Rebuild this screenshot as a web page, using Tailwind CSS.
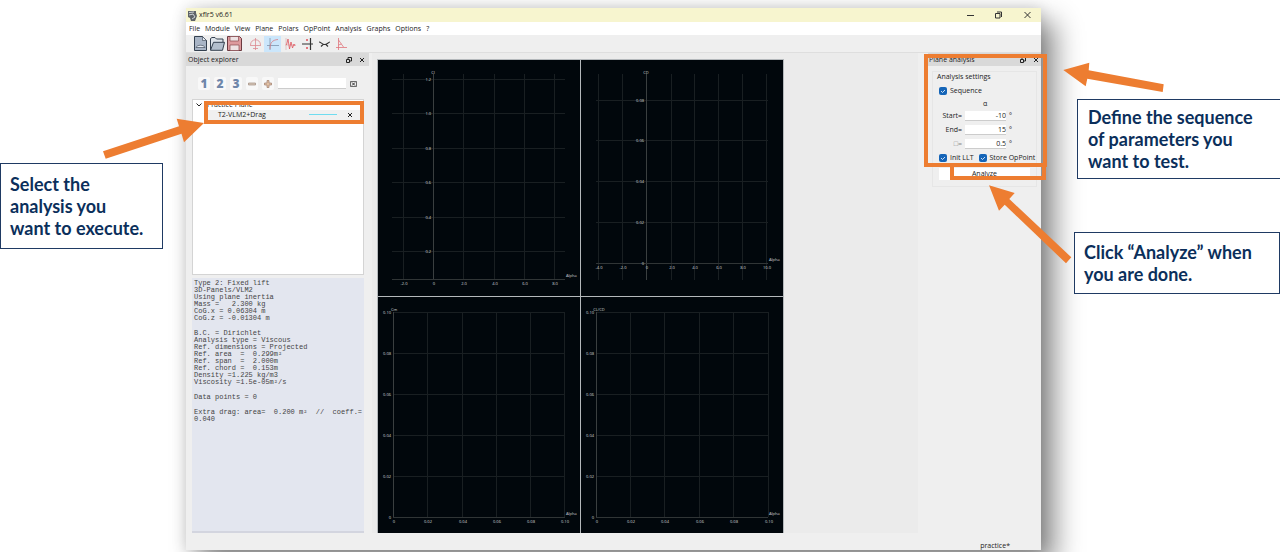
<!DOCTYPE html>
<html lang="en">
  <head>
    <meta charset="UTF-8" />
    <meta name="viewport" content="width=device-width, initial-scale=1.0" />
    <title>xflr5 v6.61</title>
    <script src="https://cdn.jsdelivr.net/npm/@tailwindcss/browser@4"></script>
  </head>
  <body class="bg-white">
    <div class="relative flex min-h-screen overflow-hidden font-['Open_Sans','Noto_Sans',sans-serif] text-[7px] leading-[10px] text-[#222]">
      <!-- Left callout -->
      <aside class="relative w-[186px] shrink-0 pt-[163px]">
        <p class="w-[163px] border border-[#1f3a63] bg-white py-[9px] pl-[9px] font-['Lato',sans-serif] text-[18px] leading-[22px] font-bold text-[#0b2f5b]">Select the<br />analysis you<br />want to execute.</p>
        <svg class="absolute top-0 left-0 z-20 overflow-visible" width="186" height="180" viewBox="0 0 186 180">
          <path fill="#ed7d31" d="M204 123 176.700 118.700 179 126.300 103 151.300 105.700 158.700 181.500 133.700 184 142.300z" />
        </svg>
      </aside>

      <!-- Application window -->
      <main class="relative mt-2 mb-[2px] flex min-w-0 flex-1 flex-col bg-[#efefef] shadow-[0_0_14px_rgba(0,0,0,0.15),14px_14px_26px_rgba(0,0,0,0.45)]">
        <header class="flex h-[14px] items-center bg-[#f7f5cf]">
          <svg class="ml-[2px]" width="9" height="11" viewBox="0 0 9 11">
            <path fill="#5d6268" d="M0 1h8v2l1 3-2 5H3L2 8 0 7z" />
            <path fill="none" stroke="#cfd3d8" d="M1 2.500 6 2M1 5l4-1 2 3-3 2" />
          </svg>
          <h1 class="ml-[2px]">xflr5 v6.61</h1>
          <div class="ml-auto flex items-center">
            <button class="mr-[21px]" aria-label="Minimize">
              <svg width="7" height="8" viewBox="0 0 7 8"><path stroke="#333" d="M0 4.500h7" /></svg>
            </button>
            <button class="mr-[22px]" aria-label="Restore">
              <svg width="7" height="8" viewBox="0 0 7 8" fill="none" stroke="#333"><path d="M.5 2.500h4.500v4.500H.5zM2 1h4.500v5" /></svg>
            </button>
            <button class="mr-[10px]" aria-label="Close">
              <svg width="7" height="8" viewBox="0 0 7 8" stroke="#333"><path d="m.5 1 6 6m0-6-6 6" /></svg>
            </button>
          </div>
        </header>
        <nav class="flex h-[13px] items-center gap-[5px] bg-white pl-[3px]">
          <a href="#">File</a>
          <a href="#">Module</a>
          <a href="#">View</a>
          <a href="#">Plane</a>
          <a href="#">Polars</a>
          <a href="#">OpPoint</a>
          <a href="#">Analysis</a>
          <a href="#">Graphs</a>
          <a href="#">Options</a>
          <a href="#">?</a>
        </nav>
        <div class="flex h-[18px] items-center border-b border-[#dedede] pl-2">
          <button class="mr-[3px]" aria-label="New">
            <svg width="13" height="15" viewBox="0 0 13 15"><path fill="#a9b5c6" stroke="#34404f" d="M.5.5h8l4 4v10H.5z" /><path fill="#e8edf4" stroke="#34404f" stroke-width=".6" d="M8.500.5v4h4zM2 11.500c1-3 8-3 9 0z" /></svg>
          </button>
          <button class="mr-[2px]" aria-label="Open">
            <svg width="15" height="14" viewBox="0 0 15 14"><path fill="#dde3ea" stroke="#34404f" d="M.5 13V1.500L2 .5h3L6.500 2H13v3" /><path fill="#b3bfcd" stroke="#34404f" d="m.5 13.300 3-8h11l-2 8z" /></svg>
          </button>
          <button class="mr-[7px]" aria-label="Save">
            <svg width="15" height="15" viewBox="0 0 15 15"><path fill="#dd9a9d" stroke="#6b3a40" d="M.5.5h12l2 2v12H.5z" /><path fill="#efe3e4" stroke="#8a4a50" stroke-width=".7" d="M3 .5h8.500V5H3zM3 9h9v5.500H3z" /></svg>
          </button>
          <button class="mr-[2px]" aria-label="3D view">
            <svg width="13" height="12" viewBox="0 0 13 12" fill="none" stroke="#dc8a90" stroke-width=".8"><path d="M6.500 0v12M1 7.500h11M1.500 7c0-7 10-7 10 0M4 10.500h5" /></svg>
          </button>
          <button class="mr-1 flex h-4 w-[17px] items-center justify-center bg-[#cbe6fb]" aria-label="Polar view">
            <svg width="12" height="12" viewBox="0 0 12 12" fill="none" stroke-width=".8"><path stroke="#7d94ad" d="M3 0v12M0 7.500h12" /><path stroke="#dc7b83" d="M3 11C3 5 5 2 11 1.500" /></svg>
          </button>
          <button class="mr-[6px]" aria-label="Stability view">
            <svg width="11" height="12" viewBox="0 0 11 12" fill="none"><path stroke="#c99" d="M1 0v12M0 7h11" stroke-width=".5" /><path stroke="#e0545d" d="m1.500 7 1.500-6 1.500 10L6 4l1.500 6L9 6l1 2" stroke-width=".8" /></svg>
          </button>
          <button class="mr-[6px]" aria-label="Cp view">
            <svg width="11" height="12" viewBox="0 0 11 12" fill="none"><path stroke="#333" stroke-width="1.200" d="M0 6h11M8.500 0v12" /><path stroke="#e0444e" d="M5 3V1m0 10V9" stroke-width="1.400" /></svg>
          </button>
          <button class="mr-[6px]" aria-label="Operating point view">
            <svg width="11" height="12" viewBox="0 0 11 12" fill="none" stroke="#333"><path stroke-width="1.200" d="M0 4c2 0 3 2.500 5.500 2.500S9 4.500 11 4M2 8.500l2-2h3l2 2" /></svg>
          </button>
          <button aria-label="Root locus view">
            <svg width="11" height="12" viewBox="0 0 11 12" fill="none" stroke="#e0757c" stroke-width=".8"><path d="M2.500 0v12M0 9.500h11M2.500 2l5 7M2.500 7l3-1" /></svg>
          </button>
        </div>

        <div class="flex flex-1">
          <!-- Object explorer -->
          <section class="flex w-[183px] shrink-0 flex-col">
            <div class="flex h-[13px] items-center bg-[#d9d9d9] pr-1 pl-[2px]">
              <h2>Object explorer</h2>
              <button class="mr-[7px] ml-auto" aria-label="Float">
                <svg width="6" height="6" viewBox="0 0 6 6" fill="none" stroke="#222"><path d="M.5 2.500h3v3h-3zM2 2V.5h3.500V4H4" /></svg>
              </button>
              <button aria-label="Close dock">
                <svg width="6" height="6" viewBox="0 0 6 6" stroke="#222"><path d="m1 1 4 4m0-4L1 5" /></svg>
              </button>
            </div>
            <div class="mt-[11px] flex h-[13px] items-center gap-1 pl-3 text-[12px] leading-[13px] font-extrabold text-[#6f87aa]">
              <button class="h-[13px] w-3 rounded-xs bg-[#f8f8f8]">1</button>
              <button class="h-[13px] w-3 rounded-xs bg-[#f8f8f8]">2</button>
              <button class="h-[13px] w-3 rounded-xs bg-[#f8f8f8]">3</button>
              <button class="flex h-[13px] w-3 items-center justify-center rounded-xs bg-[#f8f8f8]" aria-label="Collapse">
                <svg width="8" height="8" viewBox="0 0 8 8"><path fill="#d8c8bb" stroke="#a08c80" stroke-width=".7" d="M.5 3h7v2h-7z" /></svg>
              </button>
              <button class="flex h-[13px] w-3 items-center justify-center rounded-xs bg-[#f8f8f8]" aria-label="Expand">
                <svg width="8" height="8" viewBox="0 0 8 8"><path fill="#e0c0a4" stroke="#a08070" stroke-width=".7" d="M3 .5h2V3h2.500v2H5v2.500H3V5H.5V3H3z" /></svg>
              </button>
              <input type="text" aria-label="Filter" class="h-[11px] w-[68px] border-b border-[#ccc] bg-white px-1 text-[7px] font-normal text-[#222]" />
              <button aria-label="Clear filter">
                <svg width="7" height="6" viewBox="0 0 7 6" fill="none" stroke="#333"><path d="M.5.5h6v5h-6z" stroke-width=".7" /><path d="m2 1.500 3 3m0-3-3 3" /></svg>
              </button>
            </div>
            <div class="relative mt-[9px] ml-[6px] h-[176px] w-[172px] border border-[#d4d4d4] bg-white">
              <div class="flex h-[10px] items-center pl-[3px]">
                <svg width="6" height="6" viewBox="0 0 6 6" fill="none" stroke="#222"><path d="m.5 1.500 2.500 2.500 2.500-2.500" /></svg>
                <span class="ml-[5px]">Practice Plane</span>
              </div>
              <div class="ml-[15px] flex h-[10px] items-center bg-[#f0f0f0] pr-[10px] pl-[10px]">
                <span>T2-VLM2+Drag</span>
                <svg class="ml-auto" width="28" height="6" viewBox="0 0 28 6" stroke="#6fdcf0"><path d="M0 2.500h28" /></svg>
                <button class="ml-[10px]" aria-label="Toggle curve">
                  <svg width="6" height="6" viewBox="0 0 6 6" stroke="#222"><path d="m1 1 4 4m0-4L1 5" /></svg>
                </button>
              </div>
              <div class="absolute top-[1px] right-[-1px] left-[11px] h-[23px] border-4 border-[#ed7d31]"></div>
            </div>
            <div class="mt-[3px] mb-[3px] ml-[6px] flex w-[172px] flex-1 flex-col gap-2 border-b-2 border-[#d3d5df] bg-[#e3e6ef] pt-[2px] pl-[2px] font-['Liberation_Mono',monospace] text-[7px] leading-[7px] text-[#444]">
              <pre class="font-[inherit]">Type 2: Fixed lift
3D-Panels/VLM2
Using plane inertia
Mass =   2.300 kg
CoG.x = 0.06304 m
CoG.z = -0.01304 m</pre>
              <pre class="font-[inherit]">B.C. = Dirichlet
Analysis type = Viscous
Ref. dimensions = Projected
Ref. area  =  0.299m²
Ref. span  =  2.000m
Ref. chord =  0.153m
Density =1.225 kg/m3
Viscosity =1.5e-05m²/s</pre>
              <pre class="font-[inherit]">Data points = 0</pre>
              <pre class="font-[inherit]">Extra drag: area=  0.200 m²  //  coeff.=
0.040</pre>
            </div>
          </section>

          <!-- Polar graphs -->
          <section class="mb-[3px] ml-[3px] min-w-0 flex-1 bg-[#ebebeb] pt-[6px] pl-[5px]">
            <div id="graphs" class="grid w-[407px] grid-cols-2 gap-px bg-[#b4b8bb] px-px pt-px"></div>
          </section>

          <!-- Plane analysis -->
          <section class="relative ml-[10px] w-[113px] shrink-0">
            <div class="flex h-[13px] items-center bg-[#d9d9d9] pr-[2px] pl-px">
              <h2>Plane analysis</h2>
              <button class="mr-[7px] ml-auto" aria-label="Float">
                <svg width="6" height="6" viewBox="0 0 6 6" fill="none" stroke="#222"><path d="M.5 2.500h3v3h-3zM2 2V.5h3.500V4H4" /></svg>
              </button>
              <button aria-label="Close dock">
                <svg width="6" height="6" viewBox="0 0 6 6" stroke="#222"><path d="m1 1 4 4m0-4L1 5" /></svg>
              </button>
            </div>
            <form class="mt-[5px] mr-1 ml-1 border border-[#e6e6e6] px-[6px] pb-[6px]">
              <p class="-ml-[2px]">Analysis settings</p>
              <label class="mt-1 flex h-[10px] items-center gap-[3px]">
                <input type="checkbox" checked class="sr-only" />
                <svg class="rounded-xs bg-[#1565b8]" width="8" height="8" viewBox="0 0 8 8" fill="none" stroke="#fff"><path d="m2 4 1.500 1.500L6 3" stroke-width=".8" /></svg>
                Sequence
              </label>
              <p class="mt-[3px] pl-[44px]">α</p>
              <div class="mt-[2px] grid grid-cols-[23px_41px_8px] items-center gap-x-[3px] gap-y-1 text-right">
                <label for="start">Start=</label>
                <input id="start" type="text" value="-10" class="h-[10px] w-full border-b border-[#ccc] bg-white text-right" />
                <span class="text-left">°</span>
                <label for="end">End=</label>
                <input id="end" type="text" value="15" class="h-[10px] w-full border-b border-[#ccc] bg-white text-right" />
                <span class="text-left">°</span>
                <label for="delta" class="text-[#888]">□=</label>
                <input id="delta" type="text" value="0.5" class="h-[10px] w-full border-b border-[#ccc] bg-white text-right" />
                <span class="text-left">°</span>
              </div>
              <div class="mt-1 flex h-[10px] items-center gap-[5px] whitespace-nowrap">
                <label class="flex items-center gap-[3px]">
                  <input type="checkbox" checked class="sr-only" />
                  <svg class="rounded-xs bg-[#1565b8]" width="8" height="8" viewBox="0 0 8 8" fill="none" stroke="#fff"><path d="m2 4 1.500 1.500L6 3" stroke-width=".8" /></svg>
                  Init LLT
                </label>
                <label class="flex items-center gap-[3px]">
                  <input type="checkbox" checked class="sr-only" />
                  <svg class="rounded-xs bg-[#1565b8]" width="8" height="8" viewBox="0 0 8 8" fill="none" stroke="#fff"><path d="m2 4 1.500 1.500L6 3" stroke-width=".8" /></svg>
                  Store OpPoint
                </label>
              </div>
              <button type="button" class="mt-[5px] h-3 w-full bg-white">Analyze</button>
            </form>
            <div class="absolute top-px -right-[6px] -left-1 h-[113px] border-4 border-[#ed7d31]"></div>
            <div class="absolute top-[110px] -right-[5px] left-[22px] h-[17px] border-4 border-[#ed7d31]"></div>
          </section>
        </div>

        <footer class="flex h-[14px] items-center justify-end pt-[5px] pr-[31px]">practice*</footer>
      </main>

      <!-- Right callouts -->
      <aside class="relative w-[239px] shrink-0 pt-[99px]">
        <p class="ml-[36px] border border-r-0 border-[#1f3a63] bg-white py-[6px] pl-[10px] font-['Lato',sans-serif] text-[18px] leading-[22px] font-bold whitespace-nowrap text-[#0b2f5b]">Define the sequence<br />of parameters you<br />want to test.</p>
        <p class="mt-[53px] ml-[33px] border border-[#1f3a63] bg-white py-[8px] pl-[9px] font-['Lato',sans-serif] text-[18px] leading-[22px] font-bold whitespace-nowrap text-[#0b2f5b]">Click “Analyze” when<br />you are done.</p>
        <svg class="absolute top-0 left-0 z-20 overflow-visible" width="239" height="280" viewBox="1041 0 239 280">
          <path fill="#ed7d31" d="M1063.300 70 1089.300 62.700 1088.700 70.300 1163.700 84.300 1162.700 92 1087.300 78.700 1085.700 86.300z" />
          <path fill="#ed7d31" d="M989 185.300 1014.700 193 1009.300 199 1071.300 257.300 1066 263.300 1004.700 204.700 999 210.700z" />
        </svg>
      </aside>
    </div>

    <script>
      const graphs = [
        {
          title: "Cl", titleX: 55, titleY: 14, x0: 14, x1: 187, y0: 14, y1: 219, axisX: 55, axisY: 219,
          xs: [[25, "-2.0"], [55, "0"], [85, "2.0"], [116, "4.0"], [146, "6.0"], [176, "8.0"]],
          ys: [[19, "1.2"], [53, "1.0"], [88, "0.8"], [122, "0.6"], [157, "0.4"], [191, "0.2"]],
        },
        {
          title: "CD", titleX: 65, titleY: 14, x0: 15, x1: 187, y0: 14, y1: 220, axisX: 65, axisY: 203,
          xs: [[17, "-4.0"], [41, "-2.0"], [65, "0"], [90, "2.0"], [113, "4.0"], [137, "6.0"], [161, "8.0"], [185, "10.0"]],
          ys: [[40, "0.08"], [80, "0.06"], [121, "0.04"], [162, "0.02"], [203, "0"]],
        },
        {
          title: "Cm", titleX: 16, titleY: 14, x0: 15, x1: 187, y0: 15, y1: 220, axisX: 15, axisY: 220,
          xs: [[15, "0"], [49, "0.02"], [84, "0.04"], [118, "0.06"], [152, "0.08"], [186, "0.10"]],
          ys: [[15, "0.10"], [56, "0.08"], [97, "0.06"], [138, "0.04"], [179, "0.02"], [220, "0"]],
        },
        {
          title: "CL/CD", titleX: 18, titleY: 14, x0: 15, x1: 187, y0: 15, y1: 220, axisX: 15, axisY: 220,
          xs: [[15, "0"], [49, "0.02"], [83, "0.04"], [118, "0.06"], [152, "0.08"], [187, "0.10"]],
          ys: [[15, "0.10"], [56, "0.08"], [97, "0.06"], [138, "0.04"], [179, "0.02"], [220, "0"]],
        },
      ];

      function line(x1, y1, x2, y2, color) {
        return `<path stroke="${color}" d="M${x1} ${y1}L${x2} ${y2}" />`;
      }

      function text(x, y, anchor, value) {
        return `<text x="${x}" y="${y}" text-anchor="${anchor}">${value}</text>`;
      }

      document.getElementById("graphs").innerHTML = graphs
        .map((g) => {
          const grid =
            g.xs.map(([x]) => line(x + 0.5, g.y0, x + 0.5, g.y1, "#191f22")).join("") +
            g.ys.map(([y]) => line(g.x0, y + 0.5, g.x1, y + 0.5, "#191f22")).join("");
          const axes =
            line(g.axisX + 0.5, g.y0, g.axisX + 0.5, g.y1, "#3a3f40") +
            line(g.x0, g.axisY + 0.5, g.x1, g.axisY + 0.5, "#303536");
          const labels =
            g.xs.map(([x, v]) => text(x + 1, g.axisY + 6, "middle", v)).join("") +
            g.ys.map(([y, v]) => text(g.axisX - 2, y + 2, "end", v)).join("") +
            text(g.titleX, g.titleY, "middle", g.title) +
            text(188, g.axisY - 2, "start", "Alpha");
          return `<svg class="h-[236px] w-full bg-[#01070c]" viewBox="0 0 202 236" fill="none"><g>${grid}${axes}</g><g class="text-[4px]" fill="#d4d8da">${labels}</g></svg>`;
        })
        .join("");
    </script>
  </body>
</html>
